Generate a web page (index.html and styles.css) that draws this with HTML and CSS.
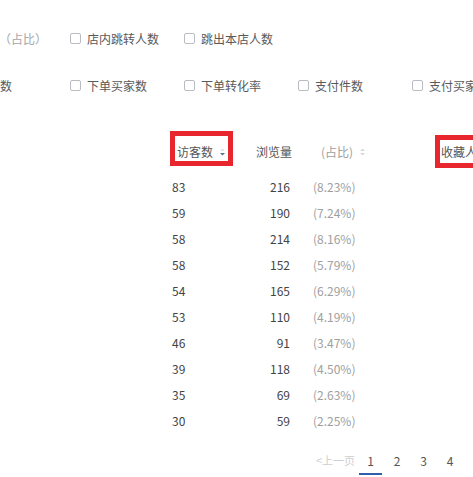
FILE: index.html
```html
<!DOCTYPE html>
<html lang="zh">
<head>
<meta charset="utf-8">
<link rel="stylesheet" href="styles.css">
</head>
<body>
<div class="page">
  <div class="options">
    <div class="opt-row">
      <label class="opt first1"><span class="box"></span><span class="lbl">跳失率<em>（占比）</em></span></label>
      <label class="opt"><span class="box"></span><span class="lbl">店内跳转人数</span></label>
      <label class="opt"><span class="box"></span><span class="lbl">跳出本店人数</span></label>
    </div>
    <div class="opt-row">
      <label class="opt first2"><span class="box"></span><span class="lbl">收藏人数</span></label>
      <label class="opt"><span class="box"></span><span class="lbl">下单买家数</span></label>
      <label class="opt"><span class="box"></span><span class="lbl">下单转化率</span></label>
      <label class="opt"><span class="box"></span><span class="lbl">支付件数</span></label>
      <label class="opt"><span class="box"></span><span class="lbl">支付买家数</span></label>
    </div>
  </div>

  <div class="table">
    <div class="row head">
      <div class="c c0"></div>
      <div class="c c1"><span class="hl">访客数<svg class="sort" width="7" height="10" viewBox="0 0 7 10"><path d="M1 4 L3.5 1.5 L6 4Z" fill="#dde1e8"/><path d="M1 6 L3.5 8.5 L6 6Z" fill="#5a6d8a"/></svg></span><span class="mark m1"></span></div>
      <div class="c c2">浏览量</div>
      <div class="c c3"><span class="muted">(占比)</span><svg class="sort" width="7" height="10" viewBox="0 0 7 10"><path d="M1 4 L3.5 1.5 L6 4Z" fill="#d6d9de"/><path d="M1 6 L3.5 8.5 L6 6Z" fill="#d6d9de"/></svg></div>
      <div class="c c4"><span class="hl2">收藏人数</span><span class="mark m2"></span></div>
    </div>
    <div class="row"><div class="c c0"></div><div class="c c1">83</div><div class="c c2">216</div><div class="c c3 muted">(8.23%)</div><div class="c c4"></div></div>
    <div class="row"><div class="c c0"></div><div class="c c1">59</div><div class="c c2">190</div><div class="c c3 muted">(7.24%)</div><div class="c c4"></div></div>
    <div class="row"><div class="c c0"></div><div class="c c1">58</div><div class="c c2">214</div><div class="c c3 muted">(8.16%)</div><div class="c c4"></div></div>
    <div class="row"><div class="c c0"></div><div class="c c1">58</div><div class="c c2">152</div><div class="c c3 muted">(5.79%)</div><div class="c c4"></div></div>
    <div class="row"><div class="c c0"></div><div class="c c1">54</div><div class="c c2">165</div><div class="c c3 muted">(6.29%)</div><div class="c c4"></div></div>
    <div class="row"><div class="c c0"></div><div class="c c1">53</div><div class="c c2">110</div><div class="c c3 muted">(4.19%)</div><div class="c c4"></div></div>
    <div class="row"><div class="c c0"></div><div class="c c1">46</div><div class="c c2">91</div><div class="c c3 muted">(3.47%)</div><div class="c c4"></div></div>
    <div class="row"><div class="c c0"></div><div class="c c1">39</div><div class="c c2">118</div><div class="c c3 muted">(4.50%)</div><div class="c c4"></div></div>
    <div class="row"><div class="c c0"></div><div class="c c1">35</div><div class="c c2">69</div><div class="c c3 muted">(2.63%)</div><div class="c c4"></div></div>
    <div class="row"><div class="c c0"></div><div class="c c1">30</div><div class="c c2">59</div><div class="c c3 muted">(2.25%)</div><div class="c c4"></div></div>
  </div>

  <div class="pager">
    <span class="prev">&lt;上一页</span>
    <span class="pg active">1</span>
    <span class="pg">2</span>
    <span class="pg">3</span>
    <span class="pg">4</span>
  </div>
</div>
</body>
</html>
```

FILE: styles.css
```css
html, body {
  margin: 0;
  padding: 0;
  background: #ffffff;
}
body {
  font-family: "Noto Sans CJK SC", "Noto Sans", sans-serif;
  font-size: 12px;
  color: #555;
  width: 473px;
  height: 477px;
  overflow: hidden;
}
.page {
  width: 473px;
  overflow: hidden;
}
.options {
  padding-top: 26px;
  display: flex;
  flex-direction: column;
  gap: 23px;
}
.opt-row {
  display: flex;
  height: 24px;
  align-items: center;
  white-space: nowrap;
}
.opt {
  display: flex;
  align-items: center;
  flex: 0 0 114px;
  width: 114px;
}
.opt.first1,
.opt.first2 {
  margin-left: -44px;
}
.box {
  width: 9px;
  height: 9px;
  border: 1px solid #b9bcc2;
  border-radius: 2px;
  margin-right: 6px;
  flex: none;
}
.lbl {
  color: #595959;
}
.lbl em {
  font-style: normal;
  color: #a6a6a6;
}
.first1 .lbl {
  margin-left: -10px;
}
.first2 .lbl {
  margin-left: -9px;
}
.table {
  margin-top: 38px;
}
.row {
  display: grid;
  grid-template-columns: 172px 60px 60px 120px 61px;
  height: 26px;
  align-items: center;
  color: #444;
}
.row.head {
  height: 38px;
  padding-bottom: 5px;
  box-sizing: border-box;
  color: #555;
}
.c {
  white-space: nowrap;
  position: relative;
  display: flex;
  align-items: center;
}
.c2 {
  justify-content: flex-end;
  padding-right: 2px;
}
.head .c2 {
  padding-right: 0;
}
.c3 {
  padding-left: 21px;
}
.head .c3 {
  padding-left: 29px;
}
.head .c1 .hl {
  padding-left: 5px;
  display: flex;
  align-items: center;
}
.sort {
  margin-left: 6px;
}
.muted {
  color: #a0a0a0;
}
.hl2 {
  padding-left: 29px;
}
.mark {
  position: absolute;
  border: 5px solid #e8262d;
  box-sizing: border-box;
}
.m1 {
  left: -2px;
  top: -12px;
  width: 63px;
  height: 35px;
}
.m2 {
  left: 23px;
  top: -8px;
  width: 80px;
  height: 33px;
}
.pager {
  margin-top: 12px;
  height: 30px;
  display: flex;
  align-items: center;
  padding-left: 316px;
  color: #555;
  white-space: nowrap;
}
.prev {
  color: #cfcfcf;
  font-size: 11px;
  margin-right: 4px;
  flex: none;
}
.pg {
  flex: none;
  width: 23px;
  height: 30px;
  display: flex;
  align-items: center;
  justify-content: center;
  margin-right: 3.5px;
  box-sizing: border-box;
}
.pg.active {
  border-bottom: 2px solid #2f5db0;
  padding-top: 2px;
}
```
